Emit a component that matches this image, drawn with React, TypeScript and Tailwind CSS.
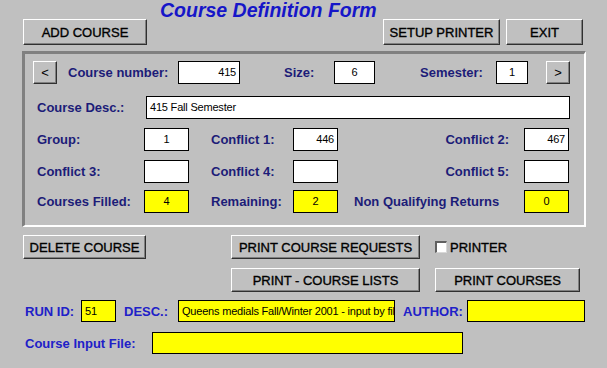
const btn =
  'flex items-center justify-center bg-[#c0c0c0] border border-t-white border-l-white border-r-[#303030] border-b-[#303030] shadow-[inset_-1px_-1px_0_#808080] text-[13px] text-black leading-none [-webkit-text-stroke:0.35px_black]';
const box = 'h-[23px] border border-black bg-white text-[11px] leading-[21px] px-[3px] text-black tracking-[-0.2px]';
const yBox = 'h-[23px] border border-black bg-[#ffff00] text-[11px] leading-[21px] px-[3px] text-black tracking-[-0.2px]';
const lbl = 'text-[13px] font-bold text-[#1c1c78] leading-none whitespace-nowrap';
const blbl = 'text-[13px] font-bold text-[#2020c8] leading-none whitespace-nowrap';

const rows = [
  { a: 'Group:', av: '1', b: 'Conflict 1:', bv: '446', bAlign: 'text-right', c: 'Conflict 2:', cv: '467', cAlign: 'text-right', yellow: false },
  { a: 'Conflict 3:', av: '', b: 'Conflict 4:', bv: '', bAlign: 'text-center', c: 'Conflict 5:', cv: '', cAlign: 'text-center', yellow: false },
  { a: 'Courses Filled:', av: '4', b: 'Remaining:', bv: '2', bAlign: 'text-center', c: 'Non Qualifying Returns', cv: '0', cAlign: 'text-center', yellow: true },
];

export default function App() {
  return (
    <div className="w-[607px] h-[368px] bg-[#c0c0c0] overflow-hidden font-['Liberation_Sans',Arial,sans-serif]">
      <div className="h-[19px] pl-[160px] text-[19.5px] leading-[20px] font-bold italic text-[#1616c8]">
        Course Definition Form
      </div>

      <div className="flex h-[26px] pl-[23px]">
        <button className={`${btn} w-[124px] h-[26px]`}>ADD COURSE</button>
        <button className={`${btn} w-[117px] h-[26px] ml-[236px]`}>SETUP PRINTER</button>
        <button className={`${btn} w-[77px] h-[26px] ml-[6px]`}>EXIT</button>
      </div>

      {/* course panel */}
      <div className="ml-[22px] mt-[6px] w-[564px] h-[176px] border-t-[3px] border-l-[3px] border-r-2 border-b-2 border-t-[#808080] border-l-[#808080] border-r-white border-b-white">
        <div className="flex items-center h-[23px] mt-[7px] pl-[8px]">
          <button className={`${btn} w-[24px] h-[23px] text-[12px] ![-webkit-text-stroke:0px]`}>&lt;</button>
          <span className={`${lbl} ml-[11px] w-[110px]`}>Course number:</span>
          <div className={`${box} w-[62px] text-right`}>415</div>
          <span className={`${lbl} ml-[44px] w-[50px]`}>Size:</span>
          <div className={`${box} w-[41px] text-center`}>6</div>
          <span className={`${lbl} ml-[45px] w-[76px]`}>Semester:</span>
          <div className={`${box} w-[32px] text-center`}>1</div>
          <button className={`${btn} w-[24px] h-[23px] ml-[18px] text-[12px] ![-webkit-text-stroke:0px]`}>&gt;</button>
        </div>

        <div className="flex items-center h-[23px] mt-[12px] pl-[12px]">
          <span className={`${lbl} w-[109px]`}>Course Desc.:</span>
          <div className={`${box} w-[424px]`}>415 Fall Semester</div>
        </div>

        {rows.map((r, i) => (
          <div key={i} className={`flex items-center h-[23px] pl-[12px] ${i === 2 ? 'mt-[7px]' : 'mt-[9px]'}`}>
            <span className={`${lbl} w-[107px]`}>{r.a}</span>
            <div className={`${r.yellow ? yBox : box} w-[45px] ${i === 0 || r.yellow ? 'text-center' : ''}`}>{r.av}</div>
            <span className={`${lbl} ml-[22px] w-[82px]`}>{r.b}</span>
            <div className={`${r.yellow ? yBox : box} w-[45px] ${r.bAlign}`}>{r.bv}</div>
            <span className={`${lbl} w-[186px] ${r.yellow ? 'pl-[16px]' : 'text-right pr-[15px]'}`}>{r.c}</span>
            <div className={`${r.yellow ? yBox : box} w-[45px] ${r.cAlign}`}>{r.cv}</div>
          </div>
        ))}
      </div>

      <div className="flex items-center h-[24px] mt-[8px] pl-[23px]">
        <button className={`${btn} w-[123px] h-[24px]`}>DELETE COURSE</button>
        <button className={`${btn} w-[189px] h-[24px] ml-[85px]`}>PRINT COURSE REQUESTS</button>
        <span className="ml-[15px] w-[12px] h-[12px] bg-white border-t-2 border-l-2 border-t-[#606060] border-l-[#606060] border-r border-b border-r-[#d8d8d8] border-b-[#d8d8d8]" />
        <span className="ml-[3px] text-[13px] text-black leading-none [-webkit-text-stroke:0.35px_black]">PRINTER</span>
      </div>

      <div className="flex items-center h-[24px] mt-[9px] pl-[231px]">
        <button className={`${btn} w-[189px] h-[24px]`}>PRINT - COURSE LISTS</button>
        <button className={`${btn} w-[145px] h-[24px] ml-[15px]`}>PRINT COURSES</button>
      </div>

      <div className="flex items-center h-[22px] mt-[8px] pl-[25px]">
        <span className={`${blbl} w-[56px]`}>RUN ID:</span>
        <div className={`${yBox} !h-[22px] w-[35px]`}>51</div>
        <span className={`${blbl} ml-[8px] w-[54px]`}>DESC.:</span>
        <div className={`${yBox} !h-[22px] w-[217px] whitespace-nowrap overflow-hidden`}>Queens medials Fall/Winter 2001 - input by fil</div>
        <span className={`${blbl} ml-[8px] w-[64px]`}>AUTHOR:</span>
        <div className={`${yBox} !h-[22px] w-[118px]`} />
      </div>

      <div className="flex items-center h-[22px] mt-[10px] pl-[25px]">
        <span className={`${blbl} w-[127px]`}>Course Input File:</span>
        <div className={`${yBox} !h-[22px] w-[311px]`} />
      </div>
    </div>
  );
}
